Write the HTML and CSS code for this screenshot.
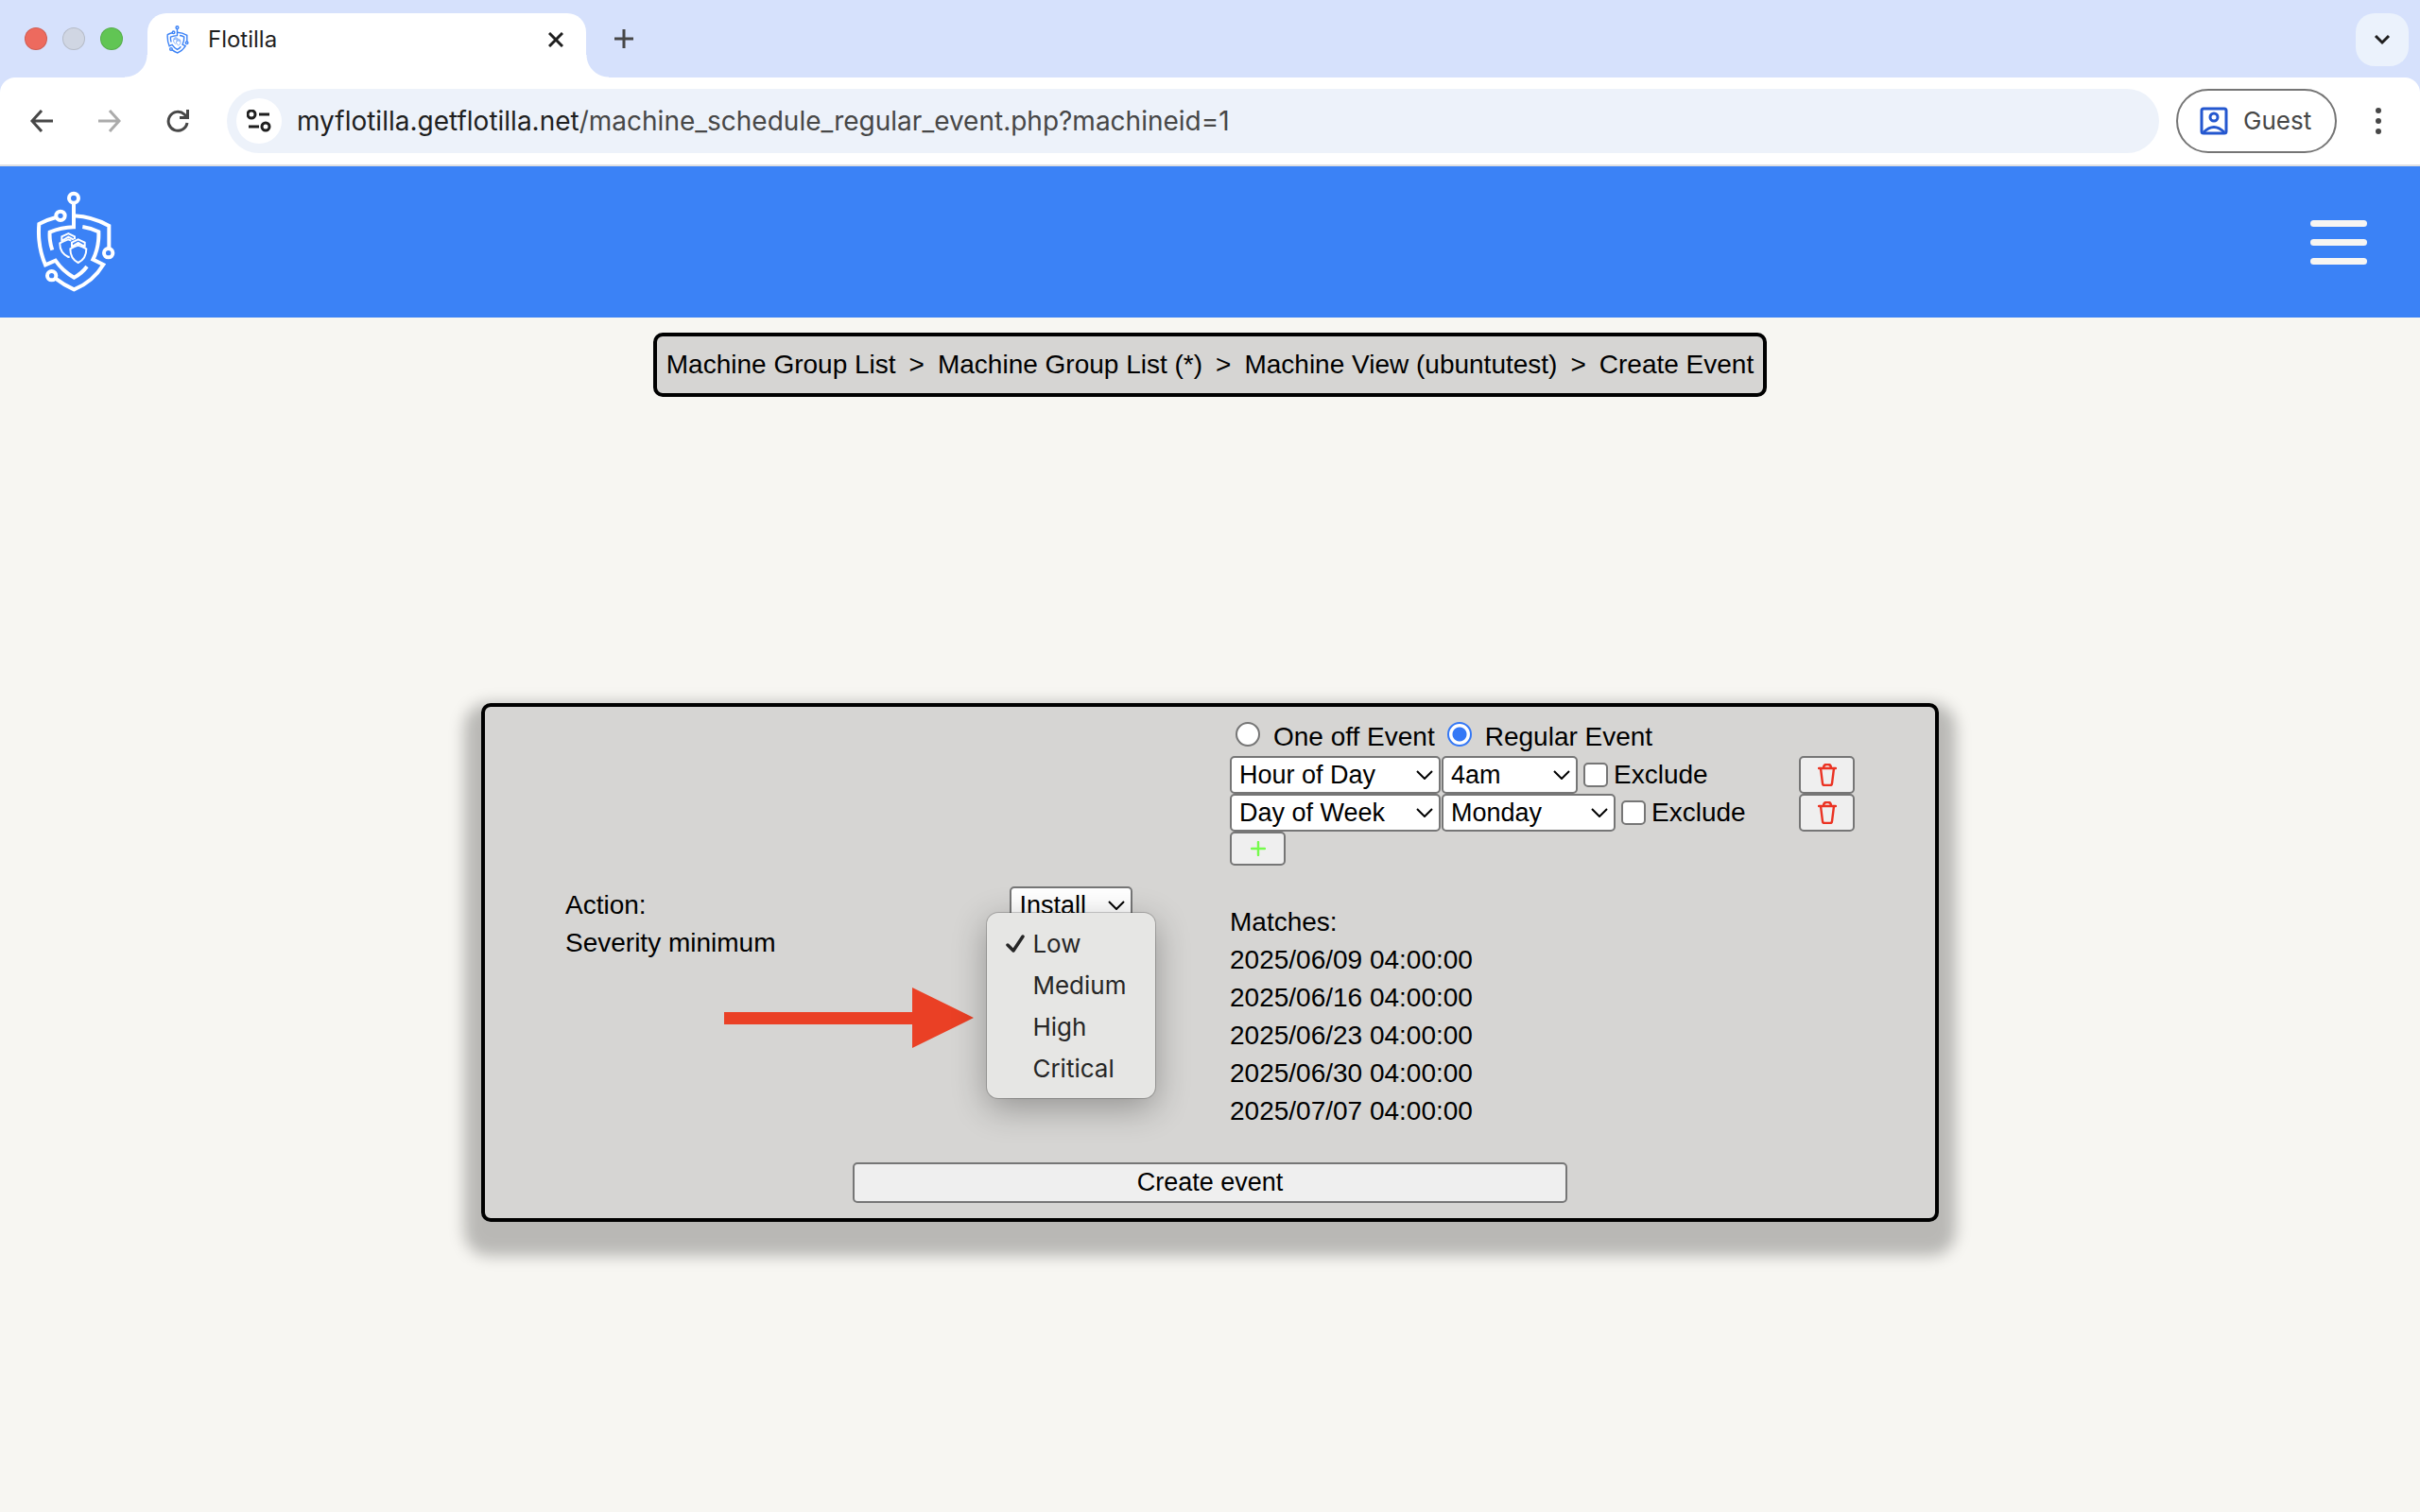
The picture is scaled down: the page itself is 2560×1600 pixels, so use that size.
FILE: index.html
```html
<!DOCTYPE html>
<html lang="en">
<head>
<meta charset="utf-8">
<title>Flotilla</title>
<meta name="viewport" content="width=device-width, initial-scale=1">
<link rel="stylesheet" href="styles.css">
</head>
<body>
<svg class="defs" aria-hidden="true">
  <symbol id="logo" viewBox="54 36 252 324">
    <g class="logo-line" fill="none" stroke="currentColor">
      <circle cx="174" cy="59" r="15"/>
      <path d="M174 74V151Q135 152 98 167Q96 195 106 224"/>
      <circle cx="132" cy="115" r="14"/>
      <path d="M118 120Q90 127 64 141Q58 210 84 271L116 257Q140 292 175 311Q200 298 216 276"/>
      <path d="M174 115Q235 118 286 147V218"/>
      <circle cx="284" cy="233" r="14"/>
      <path d="M202 150Q230 154 253 166Q255 215 235 254L268 270Q235 325 175 349Q143 335 115 313"/>
      <circle cx="104" cy="305" r="14"/>
    </g>
    <g fill="none" stroke="currentColor" stroke-width="6">
      <path d="M161 245L157 246Q129 232 130 202Q143 195 157 190L166 194"/>
      <path d="M136 197V181L157 171L177 181V190M138 194L157 182L174 191"/>
      <path d="M188 209Q176 213 163 220Q163 252 188 264Q214 252 214 220Q200 213 188 209Z"/>
      <path d="M168 215V200L188 190L209 200V215M170 212L188 201L207 212"/>
    </g>
  </symbol>
  <symbol id="trash" viewBox="0 0 20 24">
    <path d="M1 5H19M6 5Q6 1 9 1H11Q14 1 14 5M3 5L5 21Q5 23 7 23H13Q15 23 15 21L17 5" fill="none" stroke="currentColor" stroke-width="2.4" stroke-linecap="round"/>
  </symbol>
</svg>

<div class="browser">
  <div class="tabstrip">
    <div class="lights"><span class="light red"></span><span class="light grey"></span><span class="light green"></span></div>
    <div class="tab">
      <svg class="favicon"><use href="#logo"/></svg>
      <span class="tab-title">Flotilla</span>
      <button class="icon-button" aria-label="Close tab"><svg width="16" height="16" viewBox="0 0 16 16"><path d="M1 1L15 15M15 1L1 15" stroke="#1f1f1f" stroke-width="3"/></svg></button>
    </div>
    <button class="icon-button new-tab" aria-label="New tab"><svg width="20" height="20" viewBox="0 0 20 20"><path d="M0 10H20M10 0V20" stroke="#474747" stroke-width="3"/></svg></button>
    <button class="icon-button tab-search" aria-label="Search tabs"><svg width="18" height="12" viewBox="0 0 18 12"><path d="M2 2L9 9L16 2" fill="none" stroke="#1f1f1f" stroke-width="3"/></svg></button>
  </div>
  <div class="toolbar">
    <button class="icon-button nav" aria-label="Back"><svg width="24" height="24" viewBox="0 0 24 24"><path d="M24 12H2M12 1L2 12L12 23" fill="none" stroke="#474747" stroke-width="3"/></svg></button>
    <button class="icon-button nav" aria-label="Forward"><svg width="24" height="24" viewBox="0 0 24 24"><path d="M0 12H22M12 1L22 12L12 23" fill="none" stroke="#ababab" stroke-width="3"/></svg></button>
    <button class="icon-button nav" aria-label="Reload"><svg width="24" height="24" viewBox="0 0 24 24"><path d="M22 14A10 10 0 1 1 19 5L22 8" fill="none" stroke="#474747" stroke-width="3"/><path d="M24 0V10H14V7H21V0Z" fill="#474747"/></svg></button>
    <div class="omnibox">
      <button class="icon-button site-info" aria-label="Site information"><svg width="26" height="24" viewBox="0 0 26 24" fill="none" stroke="#1f1f1f" stroke-width="3"><circle cx="5" cy="5" r="4"/><path d="M13 5H24M2 18H13"/><circle cx="20" cy="18" r="4"/></svg></button>
      <span class="url"><span class="host">myflotilla.getflotilla.net</span>/machine_schedule_regular_event.php?machineid=1</span>
    </div>
    <button class="profile"><svg width="30" height="30" viewBox="0 0 30 30" fill="none" stroke="#2457cf" stroke-width="3"><rect x="2" y="2" width="26" height="26" rx="2"/><circle cx="15" cy="11" r="4"/><path d="M4 27Q15 16 26 27"/></svg>Guest</button>
    <button class="icon-button menu" aria-label="Menu"><svg width="8" height="28" viewBox="0 0 8 28" fill="#474747"><circle cx="4" cy="3" r="3"/><circle cx="4" cy="14" r="3"/><circle cx="4" cy="25" r="3"/></svg></button>
  </div>
</div>

<header class="site-header">
  <a href="#" aria-label="Flotilla home"><svg class="brand"><use href="#logo"/></svg></a>
  <button class="icon-button" aria-label="Open navigation"><svg width="60" height="47" viewBox="0 0 60 47" fill="#f7f5f2"><rect y="0" width="60" height="7" rx="3.5"/><rect y="20" width="60" height="7" rx="3.5"/><rect y="40" width="60" height="7" rx="3.5"/></svg></button>
</header>

<nav class="breadcrumbs" aria-label="Breadcrumb">
  <a href="#">Machine Group List</a><span>&gt;</span>
  <a href="#">Machine Group List (*)</a><span>&gt;</span>
  <a href="#">Machine View (ubuntutest)</a><span>&gt;</span>
  <a href="#">Create Event</a>
</nav>

<main class="page">
  <form class="card">
    <div class="columns">
      <div class="settings">
        <label for="action">Action:</label>
        <div class="field"><select id="action" class="w-action"><option>Install</option></select></div>
        <label for="severity">Severity minimum</label>
        <div class="field">
          <select id="severity" class="w-action"><option>Low</option></select>
          <ul class="popup">
            <li><svg class="tick" viewBox="0 0 20 20"><path d="M2 11L8 17L18 2" fill="none" stroke="#262626" stroke-width="3.5" stroke-linecap="round" stroke-linejoin="round"/></svg>Low</li>
            <li>Medium</li>
            <li>High</li>
            <li>Critical</li>
          </ul>
          <svg class="arrow" viewBox="0 0 264 64"><path d="M0 26H199V0L264 32L199 64V39H0Z" fill="#ea4025"/></svg>
        </div>
      </div>
      <div class="schedule">
        <div class="row">
          <input type="radio" id="oneoff" name="kind"><label for="oneoff">One off Event</label>
          <input type="radio" id="regular" name="kind" checked><label for="regular">Regular Event</label>
        </div>
        <div class="row">
          <select class="w-unit" aria-label="Rule 1 unit"><option>Hour of Day</option></select>
          <select class="w-hour" aria-label="Rule 1 value"><option>4am</option></select>
          <input type="checkbox" id="ex1"><label for="ex1">Exclude</label>
          <button type="button" class="btn small remove" aria-label="Remove rule 1"><svg width="20" height="24"><use href="#trash"/></svg></button>
        </div>
        <div class="row">
          <select class="w-unit" aria-label="Rule 2 unit"><option>Day of Week</option></select>
          <select class="w-day" aria-label="Rule 2 value"><option>Monday</option></select>
          <input type="checkbox" id="ex2"><label for="ex2">Exclude</label>
          <button type="button" class="btn small remove" aria-label="Remove rule 2"><svg width="20" height="24"><use href="#trash"/></svg></button>
        </div>
        <button type="button" class="btn small add" aria-label="Add rule"><svg width="16" height="16" viewBox="0 0 16 16"><path d="M1 8H15M8 1V15" stroke="#75fb4c" stroke-width="2.4" stroke-linecap="round"/></svg></button>
        <div class="matches">
          <div>Matches:</div>
          <div>2025/06/09 04:00:00</div>
          <div>2025/06/16 04:00:00</div>
          <div>2025/06/23 04:00:00</div>
          <div>2025/06/30 04:00:00</div>
          <div>2025/07/07 04:00:00</div>
        </div>
      </div>
    </div>
    <button type="button" class="btn submit">Create event</button>
  </form>
</main>
</body>
</html>
```
FILE: styles.css
```css
* { box-sizing: border-box; }

body {
  margin: 0;
  min-height: 100vh;
  display: flex;
  flex-direction: column;
  background: #f7f6f2;
  color: #000;
  font: 28px/40px "Liberation Sans", Arial, sans-serif;
}

button { font: inherit; color: inherit; }
.defs { display: none; }
svg { display: block; }
.logo-line { stroke-width: var(--line); }

.icon-button {
  display: flex;
  align-items: center;
  justify-content: center;
  flex: none;
  padding: 0;
  border: 0;
  background: none;
}

/* Browser window */
.browser {
  background: #d6e1fc;
  font-family: Inter, "Noto Sans", sans-serif;
  font-size: 26px;
}
.tabstrip {
  display: flex;
  align-items: center;
  height: 82px;
  padding: 14px 12px 0 26px;
}
.lights { display: flex; gap: 16px; width: 130px; margin-bottom: 14px; }
.light { width: 24px; height: 24px; border-radius: 50%; border: 1px solid #0000001f; }
.red { background: #ed6a5e; }
.grey { background: #d0d6e3; }
.green { background: #61c554; }
.tab {
  position: relative;
  display: flex;
  align-items: center;
  width: 464px;
  height: 68px;
  padding: 0 24px 12px 20px;
  border-radius: 20px 20px 0 0;
  background: #fff;
  font-size: 24px;
}
.tab::before, .tab::after {
  content: "";
  position: absolute;
  bottom: 0;
  width: 24px;
  height: 24px;
}
.tab::before { right: 100%; background: radial-gradient(circle at 0 0, #d6e1fc 23px, #fff 24px); }
.tab::after { left: 100%; background: radial-gradient(circle at 100% 0, #d6e1fc 23px, #fff 24px); }
.favicon { --line: 15; width: 24px; height: 30px; color: #3b82f6; }
.tab-title { flex: 1; margin-left: 20px; color: #1f1f1f; }
.new-tab { margin: 0 auto 14px 30px; }
.tab-search {
  width: 56px;
  height: 56px;
  margin-bottom: 12px;
  border-radius: 20px;
  background: #ebf2fc;
}
.toolbar {
  display: flex;
  align-items: center;
  padding: 12px 40px 12px 8px;
  border-bottom: 2px solid #dfe0e2;
  border-radius: 16px 16px 0 0;
  background: #fff;
}
.nav { width: 72px; }
.omnibox {
  display: flex;
  flex: 1;
  align-items: center;
  gap: 16px;
  height: 68px;
  margin-left: 16px;
  padding: 0 10px;
  border-radius: 34px;
  background: #edf2fa;
  color: #474747;
  font-size: 28px;
}
.site-info { width: 48px; height: 48px; border-radius: 50%; background: #fff; }
.host { color: #1f1f1f; }
.profile {
  display: flex;
  align-items: center;
  gap: 16px;
  width: 170px;
  height: 68px;
  margin: 0 40px 0 18px;
  padding: 0 23px;
  border: 2px solid #757575;
  border-radius: 34px;
  background: #fff;
  color: #474747;
}

/* Site header */
.site-header {
  display: flex;
  align-items: center;
  justify-content: space-between;
  height: 160px;
  padding: 0 56px 0 38px;
  background: #3b82f6;
}
.brand { --line: 12; width: 84px; height: 108px; color: #fff; }

.breadcrumbs {
  display: flex;
  gap: 14px;
  align-self: center;
  margin-top: 16px;
  padding: 10px;
  border: 4px solid #000;
  border-radius: 10px;
  background: #d6d5d3;
}
.breadcrumbs a { color: #000; text-decoration: none; }

/* Event form */
.page {
  display: flex;
  flex: 1;
  align-items: center;
  justify-content: center;
  padding-top: 16px;
}
.card {
  width: calc(60% + 6px);
  padding: 12px 85px 16px;
  border: 4px solid #000;
  border-radius: 10px;
  background: #d6d5d3;
  box-shadow: 0 18px 16px 18px #00000040;
}
.columns {
  display: grid;
  grid-template-columns: 1fr 1fr;
  gap: 42px;
  align-items: center;
}
.settings {
  display: grid;
  grid-template-columns: 62fr 38fr;
}
.field { position: relative; display: flex; justify-content: center; height: 40px; }
.row { display: flex; align-items: center; height: 40px; }

select {
  appearance: none;
  height: 40px;
  margin: 0;
  padding: 0 8px;
  border: 2px solid #767676;
  border-radius: 5px;
  background: #fff url("data:image/svg+xml,%3Csvg xmlns='http://www.w3.org/2000/svg' width='18' height='10'%3E%3Cpath d='M1 1L9 9L17 1' fill='none' stroke='%23000' stroke-width='2'/%3E%3C/svg%3E") no-repeat right 6px center;
  color: #000;
  font: 27px "Liberation Sans", Arial, sans-serif;
}
.w-action { width: 130px; }
.w-unit { width: 223px; margin-right: 1px; }
.w-hour { width: 144px; }
.w-day { width: 184px; }

input {
  appearance: none;
  flex: none;
  width: 26px;
  height: 26px;
  margin: 0;
  border: 2px solid #767676;
  background: #fff;
}
input[type="radio"] { margin: 0 14px 6px 6px; border-radius: 50%; }
label + input[type="radio"] { margin-left: 13px; }
input[type="radio"]:checked {
  border-color: #3478f6;
  background: radial-gradient(circle, #3478f6 7px, #fff 8px);
}
input[type="checkbox"] { margin: 0 6px; border-radius: 5px; }

.btn {
  display: flex;
  align-items: center;
  justify-content: center;
  padding: 0;
  border: 2px solid #767676;
  border-radius: 5px;
  background: #efefef;
}
.small { width: 59px; height: 40px; }
.remove { margin-left: auto; color: #eb3323; }
.add { height: 36px; }
.matches { margin-top: 40px; }
.submit { width: 756px; height: 43px; margin: 34px auto 0; font-size: 27px; }

.popup {
  position: absolute;
  z-index: 1;
  top: -12px;
  width: 178px;
  margin: 0;
  padding: 11px 0 9px 48px;
  border-radius: 12px;
  background: #e6e6e4;
  box-shadow: 0 0 0 1px #00000030, 0 10px 36px #00000050;
  color: #262626;
  font: 26px/44px Inter, "Noto Sans", sans-serif;
  list-style: none;
}
.tick { position: absolute; left: 20px; top: 23px; width: 20px; height: 20px; }
.arrow {
  position: absolute;
  right: calc(50% + 103px);
  top: 67px;
  width: 264px;
  height: 64px;
}
```
